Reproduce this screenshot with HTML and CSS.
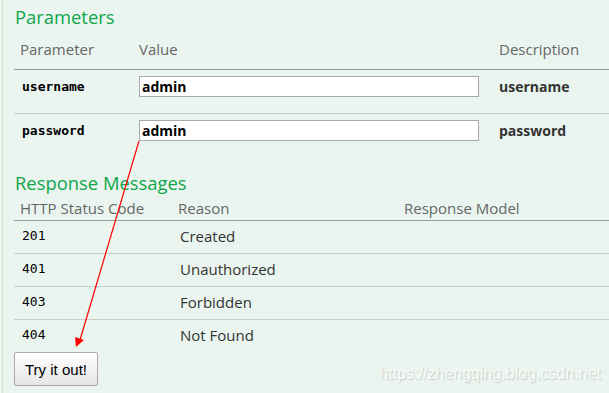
FILE: index.html
```html
<!DOCTYPE html>
<html lang="en">
<head>
    <meta charset="UTF-8">
    <title>Swagger operation</title>
    <link rel="stylesheet" href="styles.css">
</head>
<body>
    <div class="operation">
        <div class="content">
            <h4 class="section-title">Parameters</h4>
            <table class="params">
                <colgroup>
                    <col class="col-name">
                    <col class="col-value">
                    <col>
                </colgroup>
                <thead>
                    <tr>
                        <th>Parameter</th>
                        <th>Value</th>
                        <th>Description</th>
                    </tr>
                </thead>
                <tbody>
                    <tr>
                        <td class="code">username</td>
                        <td><input class="param-input" type="text" value="admin"></td>
                        <td class="desc">username</td>
                    </tr>
                    <tr>
                        <td class="code">password</td>
                        <td><input class="param-input" type="text" value="admin"></td>
                        <td class="desc">password</td>
                    </tr>
                </tbody>
            </table>

            <h4 class="section-title responses-title">Response Messages</h4>
            <table class="responses">
                <colgroup>
                    <col class="col-code">
                    <col class="col-reason">
                    <col>
                </colgroup>
                <thead>
                    <tr>
                        <th>HTTP Status Code</th>
                        <th>Reason</th>
                        <th>Response Model</th>
                    </tr>
                </thead>
                <tbody>
                    <tr><td class="status">201</td><td class="reason">Created</td><td></td></tr>
                    <tr><td class="status">401</td><td class="reason">Unauthorized</td><td></td></tr>
                    <tr><td class="status">403</td><td class="reason">Forbidden</td><td></td></tr>
                    <tr><td class="status">404</td><td class="reason">Not Found</td><td></td></tr>
                </tbody>
            </table>

            <button class="try-btn">Try it out!</button>
        </div>
    </div>

    <!-- annotation arrow drawn over the screenshot -->
    <svg class="annotation" width="609" height="393" viewBox="0 0 609 393">
        <line x1="139" y1="141" x2="80" y2="340" stroke="#ff0000" stroke-width="1.2"/>
        <polygon points="76,347 75,337 84,340" fill="#ff0000"/>
    </svg>

    <span class="watermark">https://zhengqing.blog.csdn.net</span>
</body>
</html>
```

FILE: styles.css
```css
* {
    margin: 0;
    padding: 0;
    box-sizing: border-box;
}
body {
    background-color: #ebf5f0;
    font-family: 'Open Sans', 'Noto Sans', sans-serif;
    width: 609px;
    height: 393px;
    overflow: hidden;
    position: relative;
}
.operation {
    margin-left: 2px;
    border-left: 1px solid #c6e6d4;
    height: 393px;
}
.content {
    padding: 6px 0 0 11px;
}
.section-title {
    color: #10a54a;
    font-size: 18.4px;
    font-weight: 400;
    line-height: 22px;
    padding-left: 1px;
}
.responses-title {
    margin-top: 15px;
}
table {
    width: 100%;
    border-collapse: separate;
    border-spacing: 0;
    table-layout: fixed;
}
th {
    text-align: left;
    font-weight: 400;
    color: #666;
    font-size: 15px;
    line-height: 20px;
    border-bottom: 1px solid #999;
}
td {
    color: #333;
    font-size: 15px;
    vertical-align: top;
}
.col-name {
    width: 119px;
}
.col-value {
    width: 360px;
}
.col-code {
    width: 158px;
}
.col-reason {
    width: 226px;
}
.params th {
    padding: 11px 6px 10px;
}
.params td {
    padding: 6px 6px 16px;
    line-height: 21px;
}
.params tbody tr:first-child td {
    border-bottom: 1px solid #ccc;
}
.code {
    font-family: 'DejaVu Sans Mono', monospace;
    font-weight: 700;
    font-size: 13px;
    color: #000;
    padding-left: 8px !important;
}
.desc {
    font-weight: 700;
    font-size: 14px;
}
.param-input {
    display: block;
    width: 340px;
    height: 21px;
    border: 1px solid #aaa;
    background: #fff;
    padding: 0 2px;
    font-family: 'Open Sans', sans-serif;
    font-weight: 700;
    font-size: 14px;
    color: #000;
}
.responses th {
    padding: 4px 6px 2px;
}
.responses td {
    padding: 5px 6px 7px;
    line-height: 20px;
    border-bottom: 1px solid #ccc;
}
.responses tbody tr:last-child td {
    border-bottom: none;
}
.status {
    font-family: 'DejaVu Sans Mono', monospace;
    font-size: 13px;
    color: #000;
    padding-left: 8px !important;
}
.reason {
    padding-left: 8px !important;
}
.try-btn {
    margin-top: 0;
    width: 84px;
    height: 34px;
    border: 1px solid #aaa;
    border-radius: 2px;
    background: linear-gradient(#ffffff, #e6e6e6);
    font-family: 'Liberation Sans', Arial, sans-serif;
    font-size: 15px;
    color: #000;
}
.annotation {
    position: absolute;
    left: 0;
    top: 0;
    pointer-events: none;
}
.watermark {
    position: absolute;
    right: 8px;
    bottom: 10px;
    font-family: 'Liberation Sans', Arial, sans-serif;
    font-size: 16px;
    color: #f7faf8;
    text-shadow: 1px 1px 1px #c4cac6;
}
```
